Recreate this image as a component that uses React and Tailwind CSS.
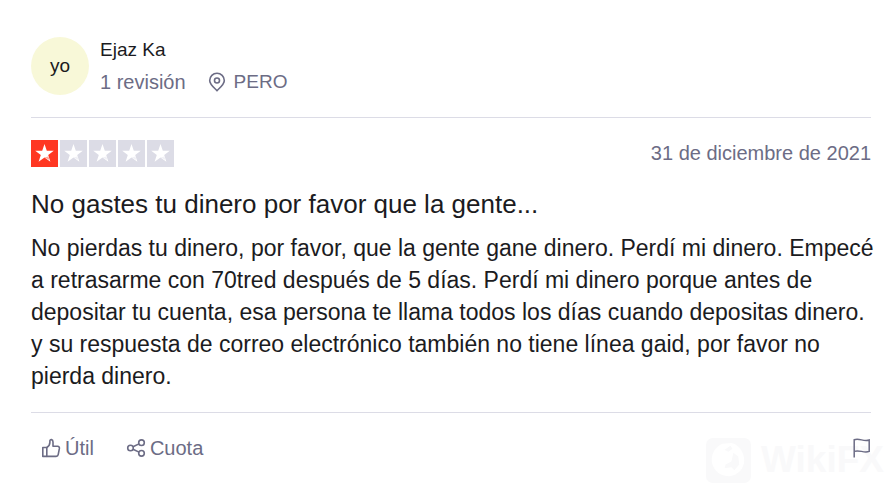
import React from 'react';

const RATING = 1;

const Star = ({ filled }) => (
  <svg viewBox="0 0 27 27" className={filled ? 'size-[27px] bg-[#ff3722]' : 'size-[27px] bg-[#dcdce6]'} aria-hidden="true">
    <path d="M13.500 4 15.800 10.700H22.800l-5.600 4.200 2.200 6.900-5.900-4.200-5.900 4.200 2.200-6.900L4.200 10.700h7z" fill="#fff" />
    <path d="m13.500 17.600 3.900-1 1.100 3.300z" fill={filled ? '#ffa599' : '#f1f1f6'} />
  </svg>
);

const PinIcon = () => (
  <svg viewBox="0 0 18 20" className="w-[18px] h-5" fill="none" stroke="currentColor" strokeWidth="1.600" aria-hidden="true">
    <path d="M9 18.600C6.300 15.900 1.700 12.600 1.700 8.500a7.300 7.300 0 0 1 14.600 0c0 4.100-4.600 7.400-7.300 10.100z" />
    <circle cx="9" cy="8.500" r="2.500" />
  </svg>
);

const ThumbIcon = () => (
  <svg viewBox="0 0 20 20" className="size-5" fill="none" stroke="currentColor" strokeWidth="1.600" strokeLinejoin="round" aria-hidden="true">
    <path d="M1.800 9.500h4v8.900h-4z" />
    <path d="M5.800 9.500C8 8.200 8.900 6.500 8.900 4.200V2.800c0-1.900 3.100-1.600 3.100 1.200v4.300h4.700c1.300 0 1.900.9 1.700 2.100l-1.200 6.200c-.2 1.200-.9 1.800-2.100 1.800H5.800" />
  </svg>
);

const ShareIcon = () => (
  <svg viewBox="0 0 20 20" className="size-5" fill="none" stroke="currentColor" strokeWidth="1.600" aria-hidden="true">
    <circle cx="4.500" cy="10" r="2.800" />
    <circle cx="15.500" cy="4.700" r="2.800" />
    <circle cx="15.500" cy="15.300" r="2.800" />
    <path d="m7 8.800 6-2.900M7 11.200l6 2.900" />
  </svg>
);

const FlagIcon = () => (
  <svg viewBox="0 0 18 20" className="w-[18px] h-5" fill="none" stroke="currentColor" strokeWidth="1.500" aria-hidden="true">
    <path d="M1.200 19.500V1.800c5-2 9.600 2.200 15 .2v11.400c-5.400 2-10-2-15 0" />
  </svg>
);

const Watermark = () => (
  <div className="absolute right-[9px] bottom-[17px] flex items-center gap-2.5 text-[#f9f9fa] pointer-events-none">
    <svg viewBox="0 0 46 46" className="size-[45px]" aria-hidden="true">
      <rect width="46" height="46" rx="7" fill="currentColor" />
      <path d="M17 6C9 9 5 17 6 25c2 9 9 14 18 14 9-1 15-8 15-16 0-9-6-17-13-18z" fill="#fff" />
      <path d="m12 9 7 3 6-4 2 3-4 3zM28 15l5 4 1 8-5 6-3-3-7 1 1-4 6-3z" fill="currentColor" />
    </svg>
    <span className="text-[37px] leading-[46px] font-bold">WikiFX</span>
  </div>
);

export default function App() {
  return (
    <div className="relative min-h-screen bg-white font-['Liberation_Sans',Arial,sans-serif] text-[#1b1b21]">
      <Watermark />
      <article className="relative pl-[31px] pr-[22px] pt-[34px]">
        <header className="flex items-center gap-[11px] pb-[19px] border-b border-[#dcdce6]">
          <div className="size-[58px] rounded-full bg-[#f8f8d8] flex items-center justify-center text-[19px]">yo</div>
          <div className="text-[19px] leading-8">
            <div>Ejaz Ka</div>
            <div className="flex items-center gap-[22px] text-[#6c6c85]">
              <span className="text-xl leading-8">1 revisión</span>
              <span className="flex items-center gap-2">
                <PinIcon />
                PERO
              </span>
            </div>
          </div>
        </header>

        <div className="flex items-center justify-between pt-[19px]">
          <div className="flex gap-0.5" role="img" aria-label="1 de 5">
            {[1, 2, 3, 4, 5].map((n) => (
              <Star key={n} filled={n <= RATING} />
            ))}
          </div>
          <time dateTime="2021-12-31" className="text-xl leading-8 text-[#6c6c85]">31 de diciembre de 2021</time>
        </div>

        <h2 className="pt-[19px] text-[26px] leading-8">No gastes tu dinero por favor que la gente...</h2>
        <div className="pt-3 pb-5 border-b border-[#dcdce6]">
          <p className="-mr-4 text-[23px] leading-8">
            No pierdas tu dinero, por favor, que la gente gane dinero. Perdí mi dinero. Empecé
            <br />
            a retrasarme con 70tred después de 5 días. Perdí mi dinero porque antes de
            <br />
            depositar tu cuenta, esa persona te llama todos los días cuando depositas dinero.
            <br />
            y su respuesta de correo electrónico también no tiene línea gaid, por favor no
            <br />
            pierda dinero.
          </p>
        </div>

        <footer className="flex items-center pt-[19px] pl-2.5 text-xl leading-8 text-[#6c6c85]">
          <button type="button" className="flex items-center gap-1">
            <ThumbIcon />
            Útil
          </button>
          <button type="button" className="flex items-center gap-1 ml-8">
            <ShareIcon />
            Cuota
          </button>
          <button type="button" aria-label="Denunciar" className="ml-auto">
            <FlagIcon />
          </button>
        </footer>
      </article>
    </div>
  );
}
